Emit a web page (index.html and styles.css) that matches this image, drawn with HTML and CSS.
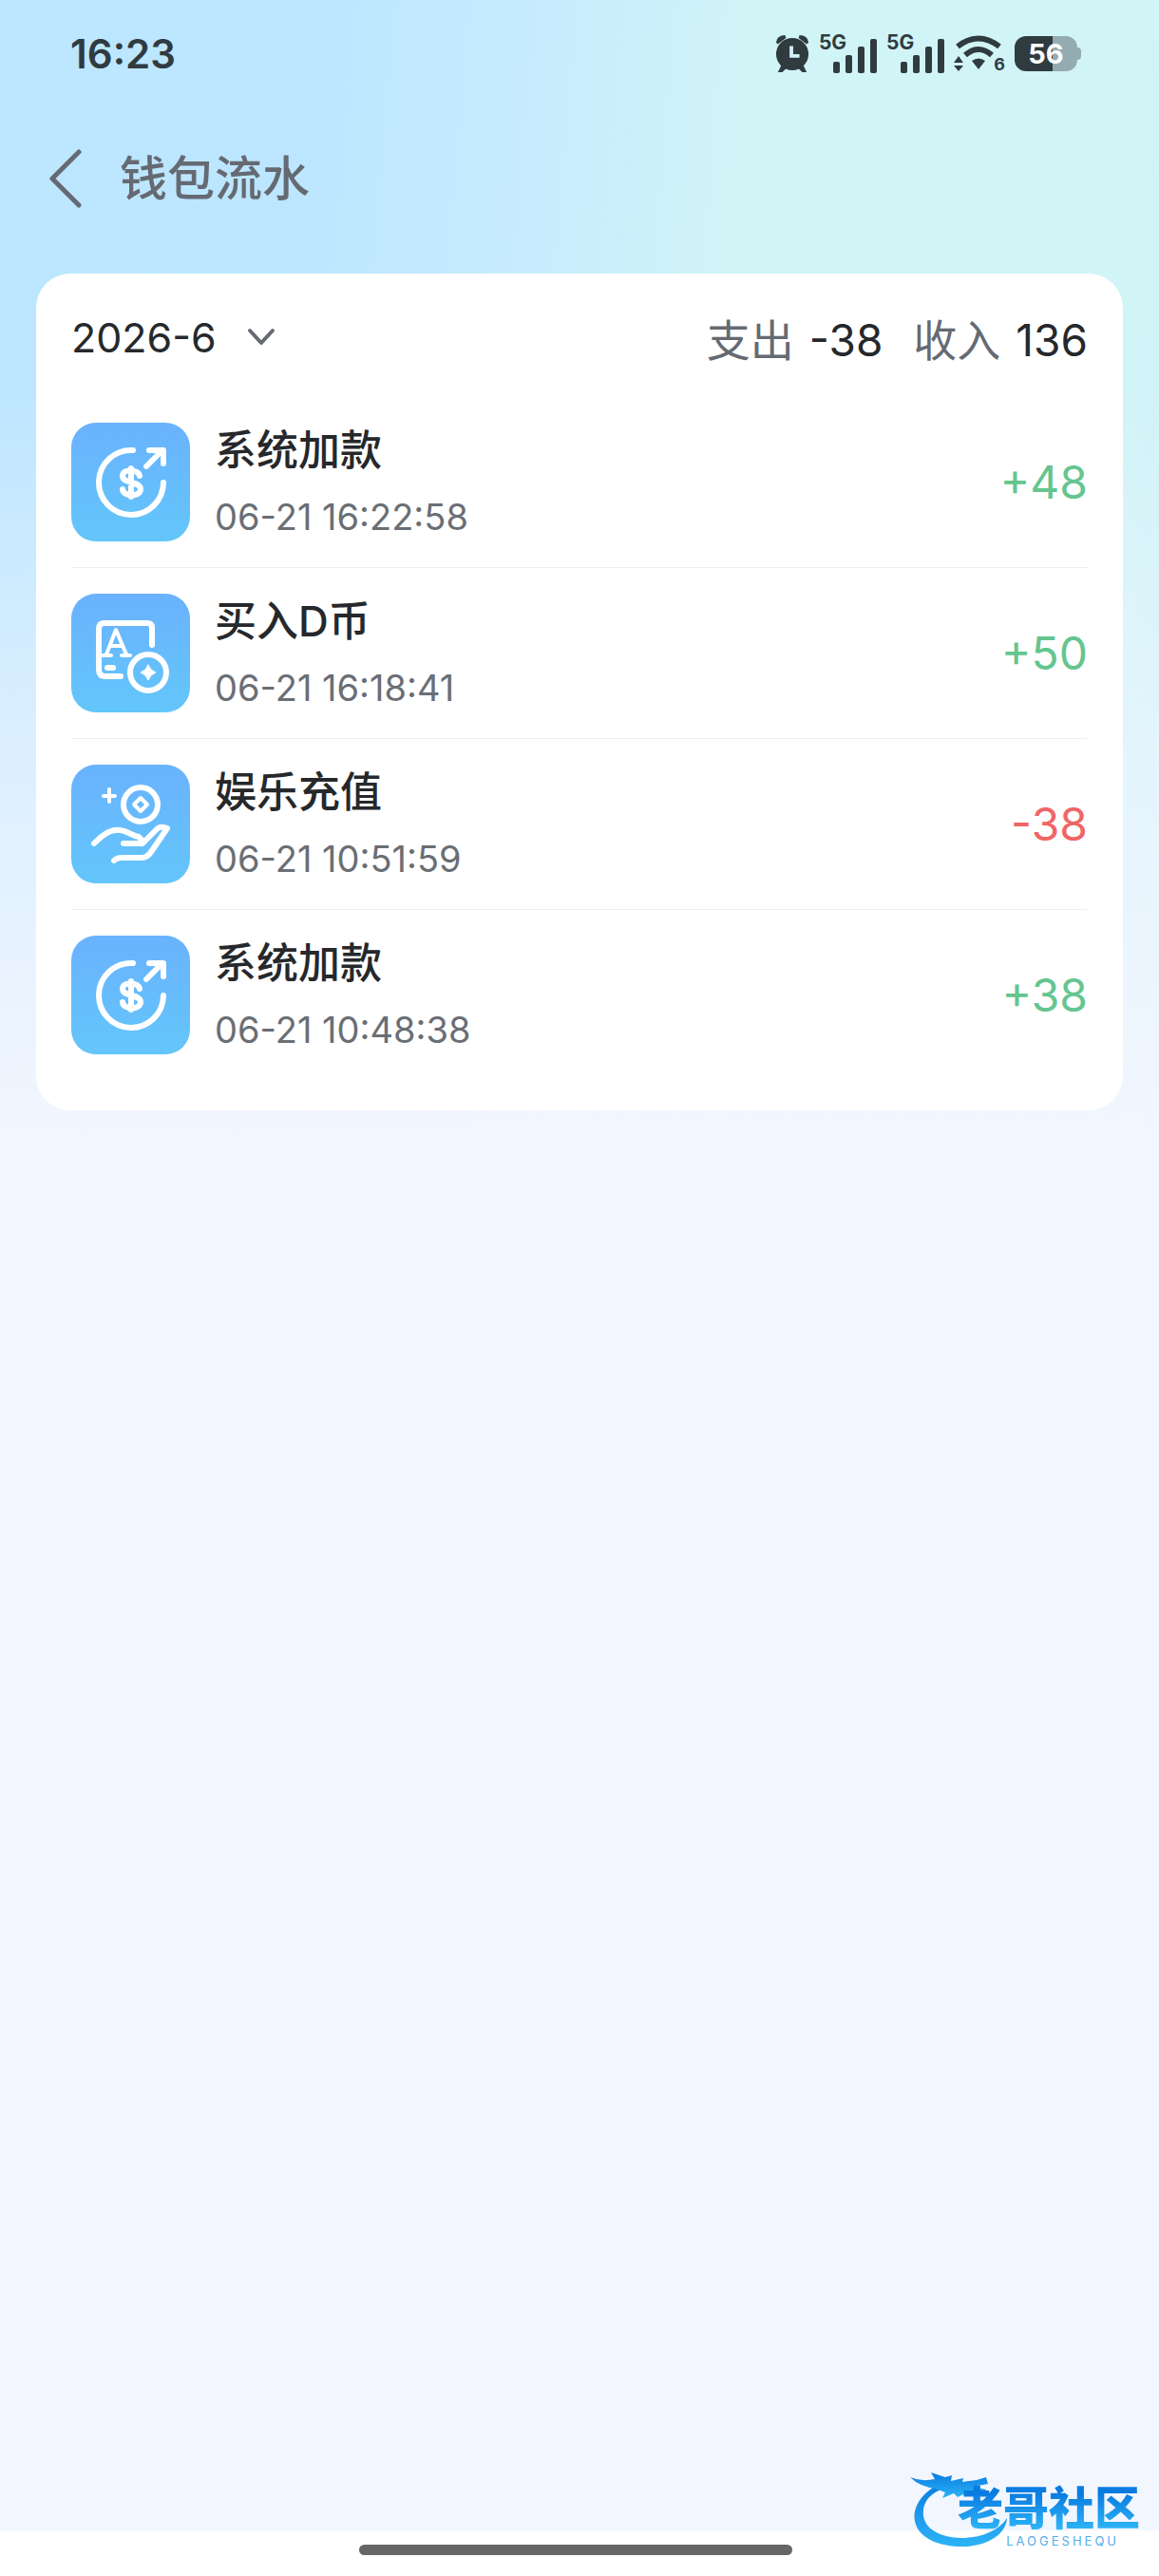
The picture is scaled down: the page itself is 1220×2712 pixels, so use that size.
FILE: index.html
```
<!DOCTYPE html>
<html lang="zh-CN">
<head>
  <meta charset="UTF-8">
  <meta name="viewport" content="width=device-width, initial-scale=1.0">
  <title>钱包流水</title>
  <link rel="stylesheet" href="styles.css">
</head>
<body>
  <!-- Shared icons -->
  <svg class="sprite" aria-hidden="true">
    <defs>
      <linearGradient id="logo-fill" x1="0" y1="0" x2="0" y2="1">
        <stop offset="0" stop-color="#0a7be0"/>
        <stop offset="1" stop-color="#2db4f7"/>
      </linearGradient>
    </defs>
    <symbol id="icon-signal" viewBox="0 0 46 36">
      <rect x="0" y="24" width="7" height="12" rx="2"/>
      <rect x="13" y="17" width="7" height="19" rx="2"/>
      <rect x="26" y="8" width="7" height="28" rx="2"/>
      <rect x="39" y="0" width="7" height="36" rx="2"/>
    </symbol>
    <symbol id="icon-system" viewBox="0 0 125 125">
      <path d="M65 29A34 34 0 1 0 97 63"/>
      <path d="M79 46L96 29M82 29H97V43"/>
      <path d="M72 56C71 49 54 48 54 56C54 65 73 61 73 70C73 79 54 78 54 70M63 48V78"/>
    </symbol>
  </svg>

  <div class="status-bar">
    <span class="clock">16:23</span>
    <div class="status-icons">
      <svg class="alarm" width="36" height="42" viewBox="0 0 38 42">
        <path d="M1 9Q2 1 11 1L12 4L3 11ZM37 9Q36 1 27 1L26 4L35 11Z"/>
        <circle cx="19" cy="22" r="18"/>
        <path d="M7 34L3 42H8L13 37ZM31 34L35 42H30L25 37Z"/>
        <path class="hands" d="M18 13V24H27"/>
      </svg>
      <div class="signal">
        <span>5G</span>
        <svg width="46" height="36"><use href="#icon-signal"/></svg>
      </div>
      <div class="signal">
        <span>5G</span>
        <svg width="46" height="36"><use href="#icon-signal"/></svg>
      </div>
      <div class="wifi">
        <svg width="52" height="38" viewBox="0 0 52 38">
          <path class="wave" d="M4 12Q26 -5 48 12M12 21Q26 9 40 21"/>
          <path d="M19 27Q26 22 33 27L26 36Z"/>
          <path d="M0 29L5 22L10 29ZM0 32L5 38L10 32Z"/>
        </svg>
        <span>6</span>
      </div>
      <div class="battery"><span>56</span></div>
    </div>
  </div>

  <header class="page-header">
    <button class="back" aria-label="返回">
      <svg width="34" height="62" viewBox="0 0 34 62"><path d="M31 3L3 31L31 59"/></svg>
    </button>
    <h1>钱包流水</h1>
  </header>

  <main class="card">
    <div class="summary">
      <button class="month">
        2026-6
        <svg width="30" height="20" viewBox="0 0 30 20"><path d="M3 3L15 16L27 3"/></svg>
      </button>
      <div class="totals">
        <span>支出 <b>-38</b></span>
        <span>收入 <b>136</b></span>
      </div>
    </div>

    <ul class="records">
      <li class="record">
        <svg class="record-icon" viewBox="0 0 125 125"><use href="#icon-system"/></svg>
        <div class="record-info">
          <h2>系统加款</h2>
          <time>06-21 16:22:58</time>
        </div>
        <span class="amount income">+48</span>
      </li>
      <li class="record">
        <svg class="record-icon" viewBox="0 0 125 125">
          <path d="M85 54V36Q85 31 80 31H35Q29 31 29 37V80Q29 87 36 87H52"/>
          <path class="thin" d="M37 64L47 38L58 64M41 55H54M33 65H42M53 65H62"/>
          <path d="M38 78H44"/>
          <circle cx="81" cy="83" r="19"/>
          <path class="solid" d="M81 75L84 80L89 83L84 86L81 91L78 86L73 83L78 80Z"/>
        </svg>
        <div class="record-info">
          <h2>买入D币</h2>
          <time>06-21 16:18:41</time>
        </div>
        <span class="amount income">+50</span>
      </li>
      <li class="record">
        <svg class="record-icon" viewBox="0 0 125 125">
          <circle cx="73" cy="42" r="18"/>
          <path class="thin" d="M73 35L80 42L73 49L66 42Z"/>
          <path class="thin" d="M40 26V39M34 33H46"/>
          <path d="M24 83C36 71 45 66 56 70C63 73 66 75 71 76Q78 82 73 83H55M75 83L90 68Q94 64 101 67L84 92Q80 98 74 98H53Q48 98 45 101"/>
        </svg>
        <div class="record-info">
          <h2>娱乐充值</h2>
          <time>06-21 10:51:59</time>
        </div>
        <span class="amount expense">-38</span>
      </li>
      <li class="record">
        <svg class="record-icon" viewBox="0 0 125 125"><use href="#icon-system"/></svg>
        <div class="record-info">
          <h2>系统加款</h2>
          <time>06-21 10:48:38</time>
        </div>
        <span class="amount income">+38</span>
      </li>
    </ul>
  </main>

  <footer class="nav-bar">
    <div class="home-indicator"></div>
    <!-- Community watermark -->
    <div class="watermark">
      <svg width="104" height="84" viewBox="0 0 104 84">
        <path d="M38 14C-10 32 -9 84 58 83C82 82 101 70 102 53C82 84 10 80 14 45C15 33 25 23 44 20Z"/>
        <path d="M0 10Q12 15 26 12L22 5L37 10L44 8L43 14L56 11L55 15L70 13L80 10L82 17L66 20L80 23L78 28L60 26L50 31L46 27L34 32L37 26L27 22Q10 20 0 10Z"/>
      </svg>
      <div class="watermark-text">
        <strong>老哥社区</strong>
        <small>LAOGESHEQU</small>
      </div>
    </div>
  </footer>
</body>
</html>
```
FILE: styles.css
```
/* General Styles */
* {
  box-sizing: border-box;
}

body {
  display: flex;
  flex-direction: column;
  min-height: 100vh;
  margin: 0;
  font-family: 'Inter', 'Noto Sans CJK SC', sans-serif;
  color: #26282b;
  background:
    linear-gradient(180deg, rgba(242, 246, 255, 0) 400px, rgba(242, 246, 255, 0.6) 800px, #f2f6ff 1200px),
    linear-gradient(95deg, #bde6ff 0%, #bce6ff 24%, #c6ebfe 42%, #d1f4f7 60%, #d1f4f7 92%, #cef0fa 100%);
  background-color: #f2f6ff;
  background-repeat: no-repeat;
  background-size: 100% 1200px;
}

button {
  padding: 0;
  border: 0;
  background: none;
  font: inherit;
  color: inherit;
  cursor: pointer;
}

.sprite {
  position: absolute;
  width: 0;
  height: 0;
}

/* Status Bar */
.status-bar {
  display: flex;
  align-items: center;
  justify-content: space-between;
  height: 112px;
  padding: 0 86px 0 74px;
  color: #303b40;
}

.clock {
  font-size: 42px;
  font-weight: 600;
}

.status-icons {
  display: flex;
  align-items: center;
  gap: 10px;
  fill: #303b40;
}

.alarm .hands {
  fill: none;
  stroke: #d0f2f8;
  stroke-width: 4;
}

.signal {
  display: flex;
  align-items: flex-end;
  height: 42px;
}

.signal span {
  align-self: flex-start;
  margin-right: -14px;
  font-size: 21px;
  font-weight: 700;
  line-height: 20px;
}

.wifi {
  display: flex;
  align-items: flex-end;
}

.wifi .wave {
  fill: none;
  stroke: #303b40;
  stroke-width: 6;
}

.wifi span {
  margin-left: -10px;
  font-size: 18px;
  font-weight: 700;
  line-height: 14px;
}

.battery {
  position: relative;
  width: 66px;
  height: 37px;
  border-radius: 12px;
  background: linear-gradient(90deg, #303b40 60%, #94abb1 60%);
  color: #fff;
  font-size: 29px;
  font-weight: 700;
  line-height: 37px;
  text-align: center;
}

.battery::after {
  content: '';
  position: absolute;
  top: 12px;
  right: -4px;
  width: 4px;
  height: 13px;
  border-radius: 0 4px 4px 0;
  background: #94abb1;
}

/* Page Header */
.page-header {
  display: flex;
  align-items: center;
  gap: 40px;
  height: 152px;
  margin-bottom: 24px;
  padding: 0 52px;
  color: #656a72;
}

.back,
.month svg {
  display: flex;
  fill: none;
  stroke: #656a72;
  stroke-width: 5;
  stroke-linecap: round;
  stroke-linejoin: round;
}

.month svg {
  stroke-width: 4;
}

.page-header h1 {
  margin: 0;
  font-size: 50px;
  font-weight: 500;
  line-height: 60px;
}

/* Card */
.card {
  margin: 0 38px;
  padding: 0 37px 32px;
  border-radius: 36px;
  background: #fff;
}

.summary {
  display: flex;
  align-items: center;
  justify-content: space-between;
  height: 130px;
  padding-top: 4px;
}

.month {
  display: flex;
  align-items: center;
  gap: 32px;
  font-size: 43px;
}

.totals {
  display: flex;
  gap: 32px;
  color: #656a72;
  font-size: 46px;
}

.totals span {
  display: flex;
  align-items: baseline;
  gap: 16px;
}

.totals b {
  color: #26282b;
  font-weight: 400;
}

/* Records */
.records {
  margin: 0;
  padding: 0;
  list-style: none;
}

.record {
  display: flex;
  align-items: center;
  gap: 26px;
  padding: 27px 0;
  border-bottom: 1px solid #eeeff1;
}

.record:last-child {
  border-bottom: 0;
}

.record-icon {
  width: 125px;
  height: 125px;
  border-radius: 26px;
  background: linear-gradient(180deg, #6ab2fe, #63c6fa);
  fill: none;
  stroke: #fff;
  stroke-width: 6;
  stroke-linecap: round;
  stroke-linejoin: round;
}

.record-icon .thin {
  stroke-width: 4;
}

.record-icon .solid {
  fill: #fff;
  stroke-width: 1;
}

.record-info {
  flex: 1;
}

.record-info h2 {
  margin: 0 0 15px;
  font-size: 44px;
  font-weight: 500;
  line-height: 58px;
}

.record-info time {
  display: block;
  color: #6a6e75;
  font-size: 38px;
  line-height: 52px;
}

.amount {
  font-size: 48px;
}

.income {
  color: #65c58f;
}

.expense {
  color: #f06566;
}

/* Bottom Bar */
.nav-bar {
  position: relative;
  display: flex;
  align-items: flex-start;
  justify-content: center;
  height: 48px;
  margin-top: auto;
  padding-top: 15px;
  background: #fff;
}

.home-indicator {
  width: 456px;
  height: 11px;
  margin-right: 9px;
  border-radius: 6px;
  background: #666;
}

.watermark {
  position: absolute;
  right: 20px;
  bottom: 30px;
  display: flex;
  align-items: flex-end;
  fill: url(#logo-fill);
}

.watermark-text {
  display: flex;
  flex-direction: column;
  margin-left: -54px;
}

.watermark-text strong {
  background: linear-gradient(180deg, #0a7be0 20%, #2db4f7 90%);
  background-clip: text;
  color: transparent;
  font-size: 48px;
  font-weight: 900;
  line-height: 54px;
}

.watermark-text small {
  align-self: flex-end;
  margin-right: 22px;
  color: #55aeea;
  font-size: 13px;
  letter-spacing: 3px;
  line-height: 14px;
}
```
